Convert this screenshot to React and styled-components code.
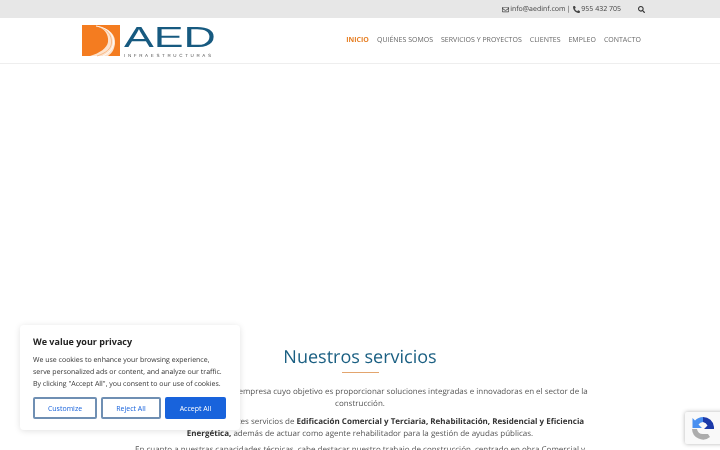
import React from 'react';
import styled, { createGlobalStyle } from 'styled-components';
import { FaRegEnvelope, FaPhoneAlt, FaSearch } from 'react-icons/fa';

const GlobalStyle = createGlobalStyle`
  html, body {
    margin: 0;
    padding: 0;
    height: 450px;
    overflow: hidden;
    background: #fff;
    font-family: "Open Sans", "Liberation Sans", sans-serif;
    text-rendering: geometricPrecision;
  }
`;

const Page = styled.div`
  width: 720px;
  height: 450px;
  overflow: hidden;
  display: flex;
  flex-direction: column;
  will-change: transform;
`;

const TopBar = styled.div`
  height: 18px;
  flex: none;
  background: #e7e7e7;
  display: flex;
  align-items: center;
  justify-content: flex-end;
  padding-right: 75px;
  color: #444;
  font-size: 7px;
`;

const Contact = styled.div`
  display: flex;
  align-items: center;
  gap: 1px;
  svg { font-size: 7px; }
`;

const Sep = styled.span`
  margin: 0 2px 0 0;
`;

const SearchBtn = styled.span`
  display: flex;
  margin-left: 17px;
  color: #333;
  font-size: 7px;
`;

const Header = styled.header`
  height: 45px;
  flex: none;
  border-bottom: 1px solid #eee;
  display: flex;
  align-items: center;
  justify-content: space-between;
  padding: 0 79px 0 82px;
`;

const Logo = styled.div`
  display: flex;
  gap: 4px;
  height: 32px;
`;

const LogoWords = styled.div`
  display: flex;
  flex-direction: column;
  width: 90px;
`;

const LogoName = styled.div`
  font-family: "Liberation Sans", sans-serif;
  font-size: 29px;
  line-height: 27px;
  height: 27px;
  color: #175a80;
  transform: scaleX(1.54);
  transform-origin: left center;
  white-space: nowrap;
`;

const LogoSub = styled.div`
  font-family: "Liberation Sans", sans-serif;
  font-size: 4.5px;
  line-height: 6px;
  margin-top: 1px;
  letter-spacing: 2.65px;
  color: #555;
  white-space: nowrap;
`;

const Nav = styled.nav`
  display: flex;
  gap: 8px;
`;

const NavLink = styled.a`
  font-size: 7px;
  line-height: 12px;
  color: ${p => (p.$active ? '#e67e22' : '#666')};
  font-weight: ${p => (p.$active ? 700 : 400)};
  white-space: nowrap;
`;

const Hero = styled.div`
  height: 279px;
  flex: none;
`;

const Content = styled.section`
  width: 462px;
  margin: 0 auto;
  text-align: center;
  color: #555;
  font-size: 8px;
  line-height: 12px;
`;

const Title = styled.h2`
  margin: 0;
  font-size: 18px;
  line-height: 28px;
  font-weight: 400;
  color: #1a5f82;
`;

const Rule = styled.div`
  width: 37px;
  height: 1px;
  background: #e3a56e;
  margin: 1px auto 13px;
`;

const Para = styled.p`
  margin: 0 0 ${p => p.$gap || 6}px;
  strong { color: #333; font-weight: 700; }
`;

const Cookie = styled.div`
  position: fixed;
  left: 20px;
  top: 325px;
  width: 220px;
  height: 105px;
  box-sizing: border-box;
  padding: 10px 13px;
  background: #fff;
  border-radius: 4px;
  box-shadow: 0 1px 6px rgba(0, 0, 0, 0.12);
`;

const CookieTitle = styled.div`
  font-size: 9px;
  line-height: 13px;
  font-weight: 700;
  color: #222;
  margin-bottom: 7px;
`;

const CookieText = styled.div`
  font-size: 7px;
  line-height: 12px;
  color: #333;
  white-space: nowrap;
`;

const CookieButtons = styled.div`
  display: flex;
  gap: 4px;
  margin-top: 6px;
`;

const CookieBtn = styled.button`
  font-family: inherit;
  font-size: 7px;
  height: 22px;
  width: ${p => p.$w}px;
  padding: 0;
  border-radius: 2px;
  border: 2px solid ${p => (p.$primary ? '#1863dc' : '#6f8fb3')};
  background: ${p => (p.$primary ? '#1863dc' : '#fff')};
  color: ${p => (p.$primary ? '#fff' : '#1863dc')};
`;

const Recaptcha = styled.div`
  position: fixed;
  left: 685px;
  top: 412px;
  width: 40px;
  height: 32px;
  background: #f9f9f9;
  border-radius: 2px;
  box-shadow: 0 0 4px rgba(0, 0, 0, 0.3);
  display: flex;
  align-items: center;
  padding-left: 7px;
  box-sizing: border-box;
`;

function LogoMark() {
  return (
    <svg width="38" height="32" viewBox="0 0 38 32">
      <rect x="0" y="0" width="38" height="31" fill="#f47c20" />
      <path d="M14 1 C28 3 34 10 33 19 C32 25 30 28 26 31 L8 31 C18 28 25 23 26 17 C27 9 22 3 14 1 Z" fill="#fde3cd" />
      <path d="M14 1 C25 3 30 10 29.500 18 C29 24 24 28 15 31" fill="none" stroke="#f7a868" strokeWidth="0.7" />
      <path d="M14 1 C27 3 32 10 31.500 18 C31 24 27 28 21 31" fill="none" stroke="#fff" strokeWidth="0.8" />
    </svg>
  );
}

function RecaptchaMark() {
  return (
    <svg width="22" height="24" viewBox="0 0 22 24">
      <path d="M11 1 A11 11 0 0 1 22 11 L22 13 L12 13 L15.500 9.500 A6 6 0 0 0 11 6 Z" fill="#1c3aa9" />
      <path d="M11 1 A11 11 0 0 0 3 4.500 L0.500 2 L0.500 12 L10 12 L6.500 8.500 A6 6 0 0 1 11 6 Z" fill="#4a90f0" />
      <path d="M0 13 L5 13 A6 6 0 0 0 11 18 L16 18 L18 21 A11 11 0 0 1 0 13 Z" fill="#adadad" />
    </svg>
  );
}

export default function App() {
  return (
    <Page>
      <GlobalStyle />
      <TopBar>
        <Contact>
          <FaRegEnvelope />
          <span>info@aedinf.com</span>
          <Sep>|</Sep>
          <FaPhoneAlt />
          <span>955 432 705</span>
        </Contact>
        <SearchBtn><FaSearch /></SearchBtn>
      </TopBar>
      <Header>
        <Logo>
          <LogoMark />
          <LogoWords>
            <LogoName>AED</LogoName>
            <LogoSub>INFRAESTRUCTURAS</LogoSub>
          </LogoWords>
        </Logo>
        <Nav>
          <NavLink $active>INICIO</NavLink>
          <NavLink>QUIÉNES SOMOS</NavLink>
          <NavLink>SERVICIOS Y PROYECTOS</NavLink>
          <NavLink>CLIENTES</NavLink>
          <NavLink>EMPLEO</NavLink>
          <NavLink>CONTACTO</NavLink>
        </Nav>
      </Header>
      <Hero />
      <Content>
        <Title>Nuestros servicios</Title>
        <Rule />
        <Para>AED Infraestructuras es una empresa cuyo objetivo es proporcionar soluciones integradas e innovadoras en el sector de la construcción.</Para>
        <Para $gap={4}>Ofrecemos a nuestros clientes servicios de <strong>Edificación Comercial y Terciaria, Rehabilitación, Residencial y Eficiencia Energética,</strong> además de actuar como agente rehabilitador para la gestión de ayudas públicas.</Para>
        <Para>En cuanto a nuestras capacidades técnicas, cabe destacar nuestro trabajo de construcción, centrado en obra Comercial y Terciaria.</Para>
      </Content>
      <Cookie>
        <CookieTitle>We value your privacy</CookieTitle>
        <CookieText>We use cookies to enhance your browsing experience,<br />serve personalized ads or content, and analyze our traffic.<br />By clicking "Accept All", you consent to our use of cookies.</CookieText>
        <CookieButtons>
          <CookieBtn $w={64}>Customize</CookieBtn>
          <CookieBtn $w={60}>Reject All</CookieBtn>
          <CookieBtn $w={61} $primary>Accept All</CookieBtn>
        </CookieButtons>
      </Cookie>
      <Recaptcha><RecaptchaMark /></Recaptcha>
    </Page>
  );
}
